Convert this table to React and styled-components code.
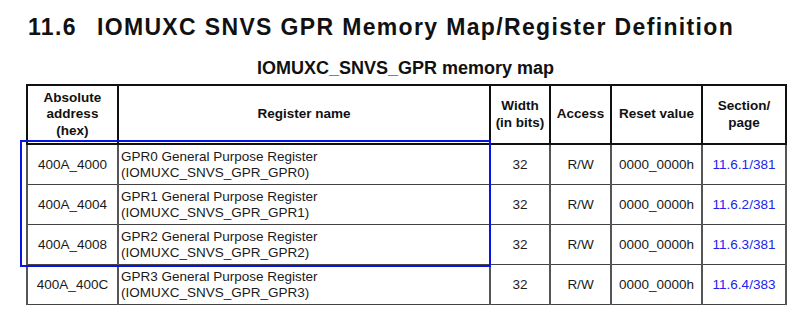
import React from "react";
import styled, { createGlobalStyle } from "styled-components";

const Global = createGlobalStyle`
  body {
    margin: 0;
    background: #fff;
    font-family: "Liberation Sans", Arial, sans-serif;
    color: #1a1a1a;
  }
`;

const Page = styled.div`
  width: 800px;
  height: 321px;
  padding: 14px 0 0 26px;
  box-sizing: border-box;
  position: relative;
  overflow: hidden;
`;

const Heading = styled.h1`
  margin: 0;
  font-size: 23px;
  font-weight: bold;
  line-height: 26px;
  letter-spacing: 1.35px;
  color: #111;
  display: flex;
  gap: 20px;
  padding-left: 2px;
`;

const Caption = styled.div`
  width: 759px;
  text-align: center;
  font-size: 18px;
  font-weight: bold;
  line-height: 20px;
  margin-top: 18px;
  color: #111;
`;

const Table = styled.table`
  margin-top: 6px;
  border-collapse: collapse;
  table-layout: fixed;
  width: 759px;
  font-size: 13.5px;
`;

const Col = styled.col`
  width: ${(p) => p.$w}px;
`;

const Th = styled.th`
  height: 57px;
  border: 2px solid #111;
  font-weight: bold;
  line-height: 16.5px;
  padding: 0;
  color: #111;
`;

const Td = styled.td`
  height: 39px;
  border: 1px solid #444;
  border-left: 2px solid #555;
  border-right: 2px solid #555;
  padding: 0 ${(p) => (p.$left ? "2px" : "0")};
  text-align: ${(p) => (p.$left ? "left" : "center")};
  line-height: 16px;
  color: ${(p) => (p.$link ? "#2222ee" : "#1a1a1a")};
`;

const Highlight = styled.div`
  position: absolute;
  left: 20px;
  top: 140px;
  width: 471px;
  height: 127px;
  border: 2px solid #0a14e0;
  box-sizing: border-box;
  pointer-events: none;
`;

const cols = [
  { w: 91, label: ["Absolute", "address", "(hex)"] },
  { w: 372, label: ["Register name"] },
  { w: 60, label: ["Width", "(in bits)"] },
  { w: 61, label: ["Access"] },
  { w: 91, label: ["Reset value"] },
  { w: 84, label: ["Section/", "page"] },
];

const rows = [
  ["400A_4000", "GPR0", "11.6.1/381"],
  ["400A_4004", "GPR1", "11.6.2/381"],
  ["400A_4008", "GPR2", "11.6.3/381"],
  ["400A_400C", "GPR3", "11.6.4/383"],
];

export default function App() {
  return (
    <Page>
      <Global />
      <Heading>
        <span>11.6</span>
        <span>IOMUXC SNVS GPR Memory Map/Register Definition</span>
      </Heading>
      <Caption>IOMUXC_SNVS_GPR memory map</Caption>
      <Table>
        <colgroup>
          {cols.map((c) => (
            <Col key={c.label[0]} $w={c.w} />
          ))}
        </colgroup>
        <thead>
          <tr>
            {cols.map((c) => (
              <Th key={c.label[0]}>
                {c.label.map((l, i) => (
                  <div key={i}>{l}</div>
                ))}
              </Th>
            ))}
          </tr>
        </thead>
        <tbody>
          {rows.map(([addr, name, sec]) => (
            <tr key={addr}>
              <Td>{addr}</Td>
              <Td $left>
                {name} General Purpose Register
                <br />
                (IOMUXC_SNVS_GPR_{name})
              </Td>
              <Td>32</Td>
              <Td>R/W</Td>
              <Td>0000_0000h</Td>
              <Td $link>{sec}</Td>
            </tr>
          ))}
        </tbody>
      </Table>
      <Highlight />
    </Page>
  );
}
